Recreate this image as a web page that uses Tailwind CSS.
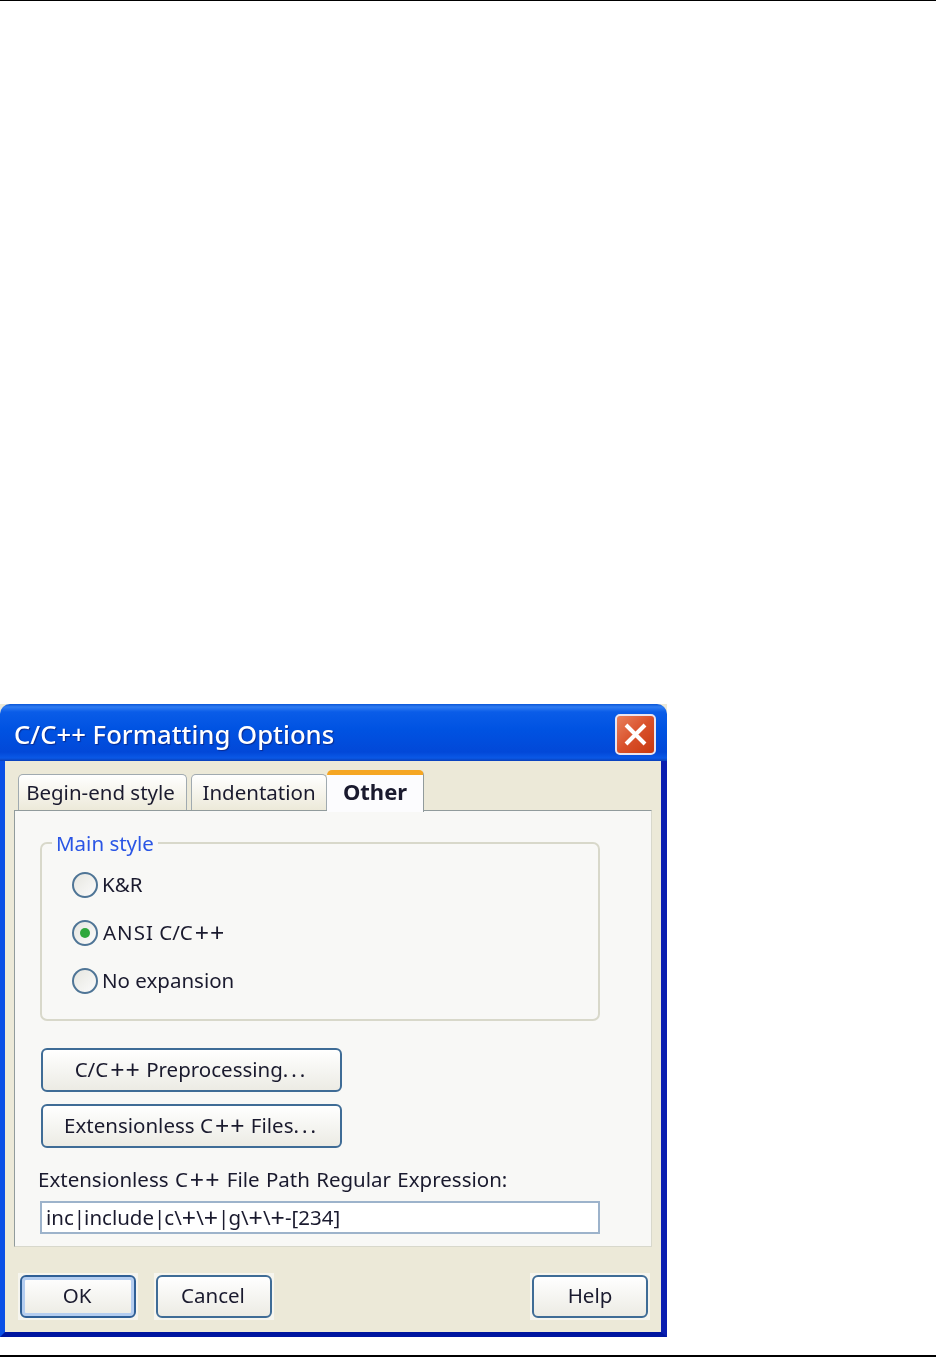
<!DOCTYPE html>
<html lang="en">
<head>
  <meta charset="UTF-8">
  <title>C/C++ Formatting Options</title>
  <script src="https://cdn.jsdelivr.net/npm/@tailwindcss/browser@4"></script>
</head>
<body class="bg-white w-[936px] h-[1357px] overflow-hidden font-['Noto_Sans',sans-serif] text-[20.5px] leading-none text-[#1a1a2e]">
  <div class="h-px bg-black"></div>

  <!-- dialog window, beige shows through the rounded corners -->
  <div class="mt-[703px] w-[667px] h-[633px] bg-[#ece9d8] blur-[0.4px]">
  <div class="h-full flex flex-col rounded-t-[10px] overflow-hidden">
    <div class="h-[57px] shrink-0 flex items-center justify-between pl-[14px] pr-[11px] bg-[linear-gradient(180deg,#0a56d8_0px,#2f7cf2_3px,#0a5ce8_8px,#0053e2_25px,#0248d8_48px,#0a58e6_54px,#0a3fb8_57px)]">
      <span class="pt-[5px] text-[25.7px] font-medium text-white [text-shadow:1px_1px_1px_#0a2a90]">C/C++ Formatting Options</span>
      <button class="mt-[3px] w-[41px] h-[41px] rounded-[5px] border-2 border-[#e8e4f0] bg-gradient-to-br from-[#e8805c] via-[#d9502a] to-[#c8380e] flex items-center justify-center">
        <svg width="27" height="27" viewBox="0 0 27 27"><path d="M4 4L23 23M23 4L4 23" stroke="#fff" stroke-width="4"/></svg>
      </button>
    </div>

    <div class="flex-1 flex flex-col border-l-[5px] border-l-[#0a50e6] border-r-[6px] border-r-[#0a1eb0] border-b-[5px] border-b-[#0016a0] bg-[#ece9d8]">
      <!-- tabs -->
      <div class="h-[50px] pl-[13px] pt-[9px] flex items-end shrink-0">
        <div class="w-[169px] h-[37px] pb-[2px] pr-[4px] rounded-t-[5px] border border-b-0 border-[#a0aab0] bg-gradient-to-b from-white to-[#ece9d8] flex items-center justify-center">Begin-end style</div>
        <div class="ml-[4px] w-[136px] h-[37px] pb-[2px] rounded-t-[5px] border border-b-0 border-[#a0aab0] bg-gradient-to-b from-white to-[#ece9d8] flex items-center justify-center">Indentation</div>
        <div class="relative z-10 -mb-px w-[97px] h-[42px] pb-[5px] rounded-t-[5px] border-t-[5px] border-t-[#f5a623] border-r border-r-[#919b9c] bg-[#fcfcfe] flex items-center justify-center font-bold text-[22px]">Other</div>
      </div>

      <!-- panel -->
      <div class="ml-[9px] w-[638px] h-[437px] -mt-px border border-[#919b9c] border-r-[#d8d8cc] border-b-[#d8d8cc] bg-[#f8f8f6] pl-[25px] pt-[31px]">
        <div class="relative w-[560px] h-[179px] rounded-[7px] border-2 border-[#d8d8ca] pl-[30px] pt-[28px] flex flex-col gap-[22px]">
          <span class="absolute left-[10px] -top-[11px] px-[4px] pb-[2px] bg-[#f8f8f6] text-[#2a55e5]">Main style</span>
          <label class="flex items-center gap-[4px] h-[26px]">
            <span class="w-[26px] h-[26px] rounded-full border-2 border-[#4f7596] bg-gradient-to-br from-[#e6e6e0] to-[#fbfbfb]"></span><span class="pb-[2px]">K&amp;R</span>
          </label>
          <label class="flex items-center gap-[4px] h-[26px]">
            <span class="w-[26px] h-[26px] rounded-full border-2 border-[#4f7596] bg-gradient-to-br from-[#e6e6e0] to-[#fbfbfb] flex items-center justify-center"><span class="w-[10px] h-[10px] rounded-full bg-[#2fa83c]"></span></span><span class="pb-[2px] pl-px"><span class="tracking-[1px]">ANSI</span> C/<span class="tracking-[2px]">C</span><span class="text-[25px] leading-[0] tracking-[1px] align-[-1.5px]">++</span></span>
          </label>
          <label class="flex items-center gap-[4px] h-[26px]">
            <span class="w-[26px] h-[26px] rounded-full border-2 border-[#4f7596] bg-gradient-to-br from-[#e6e6e0] to-[#fbfbfb]"></span><span class="pb-[2px]">No expansion</span>
          </label>
        </div>

        <button class="block ml-px mt-[27px] w-[301px] h-[44px] pb-[2px] rounded-[6px] border-2 border-[#3f6c96] bg-gradient-to-b from-white to-[#ecebe4]">C/<span class="tracking-[2px]">C</span><span class="text-[25px] leading-[0] tracking-[1px] align-[-1.5px]">++</span> Preprocessing<span class="tracking-[3px]">...</span></button>
        <button class="block ml-px mt-[12px] w-[301px] h-[44px] pb-[2px] rounded-[6px] border-2 border-[#3f6c96] bg-gradient-to-b from-white to-[#ecebe4]">Extensionless <span class="tracking-[2px]">C</span><span class="text-[25px] leading-[0] tracking-[1px] align-[-1.5px]">++</span> Files<span class="tracking-[3px]">...</span></button>

        <div class="mt-[21px] -ml-[2px] [word-spacing:1px]">Extensionless <span class="tracking-[2px]">C</span><span class="text-[25px] leading-[0] tracking-[1px] align-[-1.5px]">++</span> File Path Regular Expression:</div>
        <div class="mt-[11px] w-[560px] h-[33px] border-2 border-[#9db3cb] bg-white pl-[4px] flex items-center"><span>inc<span class="tracking-[-1px]">|</span>include<span class="tracking-[-1px]">|</span>c\<span class="text-[25px] leading-[0] align-[-1.5px]">+</span>\<span class="text-[25px] leading-[0] align-[-1.5px]">+</span><span class="tracking-[-1px]">|</span>g\<span class="text-[25px] leading-[0] align-[-1.5px]">+</span>\<span class="text-[25px] leading-[0] align-[-1.5px]">+</span>-[234]</span></div>
      </div>

      <!-- footer buttons -->
      <div class="mt-[26px] pl-[13px] pr-[11px] flex">
        <span class="block p-[2px] bg-[#f6f5ee]"><button class="block w-[116px] h-[43px] pb-[2px] pr-[2px] rounded-[6px] border-2 border-[#2f5f96] bg-gradient-to-b from-white to-[#ecebe4] shadow-[inset_0_0_0_3px_#b4cdf0]">OK</button></span>
        <span class="block ml-[16px] p-[2px] bg-[#f6f5ee]"><button class="block w-[116px] h-[43px] pb-[2px] pr-[2px] rounded-[6px] border-2 border-[#3f6c96] bg-gradient-to-b from-white to-[#ecebe4]">Cancel</button></span>
        <span class="block ml-auto p-[2px] bg-[#f6f5ee]"><button class="block w-[116px] h-[43px] pb-[2px] rounded-[6px] border-2 border-[#3f6c96] bg-gradient-to-b from-white to-[#ecebe4]">Help</button></span>
      </div>
    </div>
  </div>
  </div>

  <div class="mt-[18px] h-[2px] bg-black"></div>
</body>
</html>
